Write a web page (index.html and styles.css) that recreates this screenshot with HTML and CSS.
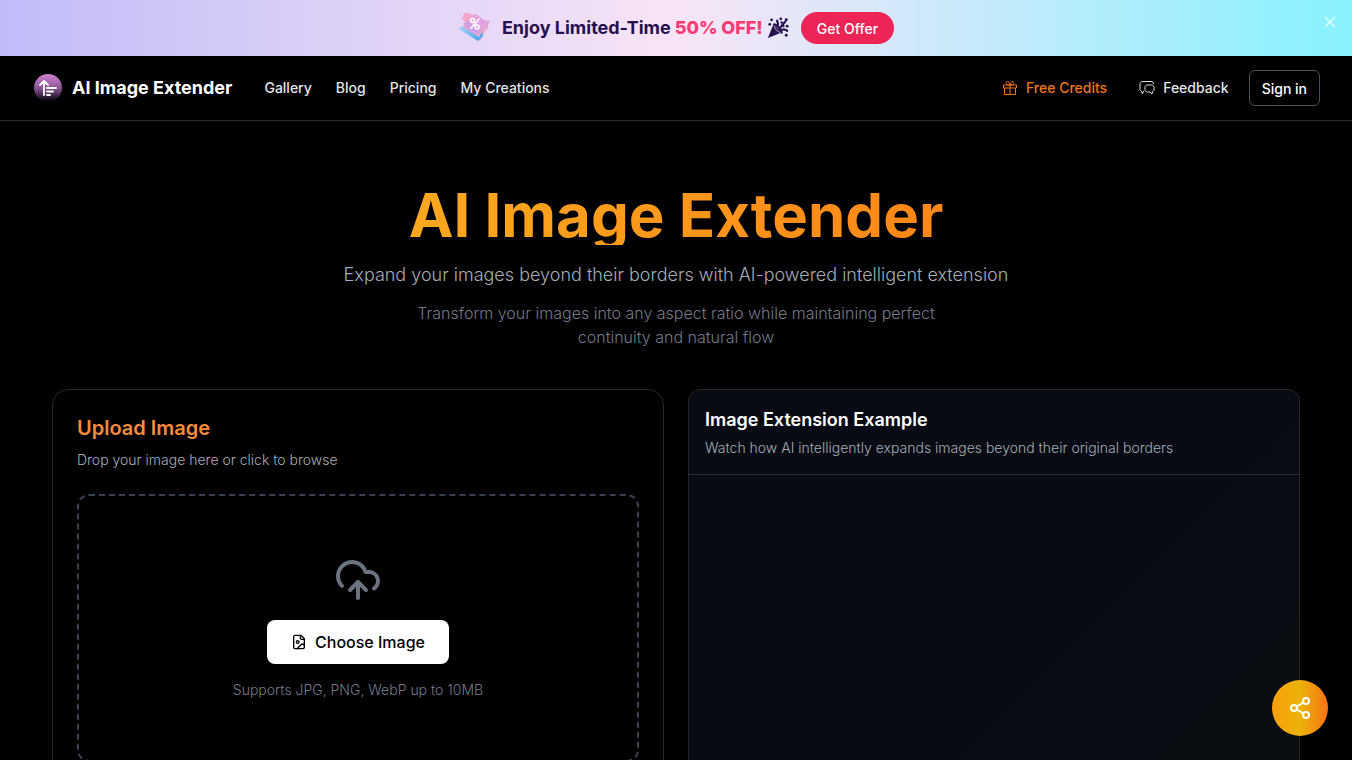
FILE: index.html
```html
<!DOCTYPE html>
<html lang="en">
<head>
    <meta charset="UTF-8">
    <meta name="viewport" content="width=device-width, initial-scale=1.0">
    <title>AI Image Extender</title>
    <link rel="stylesheet" href="styles.css">
</head>
<body>
    <div class="promo">
        <svg class="promo-art" viewBox="0 0 32 32" aria-hidden="true">
            <defs>
                <linearGradient id="ticket" x1="0" y1="0" x2="1" y2="1">
                    <stop offset="0" stop-color="#ffa9bf"/>
                    <stop offset="0.5" stop-color="#dca0e4"/>
                    <stop offset="1" stop-color="#ffb3b9"/>
                </linearGradient>
                <linearGradient id="stub" x1="0" y1="0" x2="1" y2="1">
                    <stop offset="0" stop-color="#a5dcf8"/>
                    <stop offset="1" stop-color="#3e9eea"/>
                </linearGradient>
            </defs>
            <path d="M6 1l5 0 3 2 4-1 4 3 4 3 6 1-2 4 0 3-3 3-4 9-19-11 3-7-3-3z" fill="url(#ticket)"/>
            <path d="M3 14l18 11 3-5 1 4-5 5L1 17z" fill="url(#stub)"/>
            <path d="M5 12l16 10 2-3-14-10z" fill="#bd9cef" opacity="0.6"/>
            <g fill="none" stroke="#fff" stroke-width="1.6" stroke-linecap="round">
                <path d="M21 7l-8 9"/>
                <circle cx="14.500" cy="8.500" r="2"/>
                <circle cx="19" cy="15" r="2"/>
            </g>
        </svg>
        <p class="promo-text">
            Enjoy Limited-Time <strong class="promo-off">50% OFF!</strong>
            <svg class="popper" viewBox="0 0 24 24" aria-hidden="true">
                <path d="M7 8L1 23l15-6z" fill="currentColor"/>
                <path d="M8 9c0 4 3 7 7 8" fill="none" stroke="#e9e4f7" stroke-width="0.8"/>
                <g fill="none" stroke="currentColor" stroke-width="2.4" stroke-linecap="round">
                    <path d="M8 8c3 1 7 5 8 9M11 10c2-2 1-4 0-6M14 12l6-7M15 15c2-2 4-2 7 0"/>
                </g>
                <g fill="currentColor">
                    <circle cx="5" cy="3" r="1.5"/>
                    <circle cx="3" cy="8" r="1.5"/>
                    <circle cx="15" cy="2" r="1.5"/>
                    <circle cx="16" cy="6" r="1.3"/>
                    <circle cx="21" cy="3" r="1.6"/>
                    <circle cx="22" cy="10" r="1.5"/>
                    <circle cx="18" cy="10" r="1.2"/>
                    <circle cx="21" cy="20" r="1.6"/>
                </g>
            </svg>
        </p>
        <button class="promo-button">Get Offer</button>
        <button class="promo-close" aria-label="Close">
            <svg viewBox="0 0 16 16"><path d="M3 3l10 10M13 3L3 13"/></svg>
        </button>
    </div>

    <header class="header">
        <a class="brand" href="#">
            <svg class="logo" viewBox="0 0 28 28" aria-hidden="true">
                <defs>
                    <linearGradient id="orb" x1="0" y1="0" x2="0" y2="1">
                        <stop offset="0" stop-color="#cf83d6"/>
                        <stop offset="0.5" stop-color="#8a5596"/>
                        <stop offset="0.95" stop-color="#0c0610"/>
                    </linearGradient>
                </defs>
                <circle cx="14" cy="14" r="14" fill="url(#orb)"/>
                <path d="M10 21V7M6 11l4-4 4 4M13 14h9M13 17.500h6M13 21h3" fill="none" stroke="#fff" stroke-width="1.8" stroke-linecap="round" stroke-linejoin="round"/>
            </svg>
            AI Image Extender
        </a>
        <nav class="nav">
            <a href="#">Gallery</a>
            <a href="#">Blog</a>
            <a href="#">Pricing</a>
            <a href="#">My Creations</a>
        </nav>
        <div class="actions">
            <a class="action credits" href="#">
                <svg class="icon" viewBox="0 0 16 16" aria-hidden="true">
                    <path d="M1.500 5h13v3h-13zM2.500 8v6.500h11V8M8 5v9.500M8 5C5 5 3.500 3.500 4.500 2S7.500 2 8 5c.5-3 2.500-4.500 3.500-3S11 5 8 5z"/>
                </svg>
                Free Credits
            </a>
            <a class="action" href="#">
                <svg class="icon" viewBox="0 0 16 16" aria-hidden="true">
                    <path d="M5 11.500H4l-.5 2.500-1-2.500c-1-.5-1.500-1.500-1.500-3V5c0-2 1-3.500 3-3.500h8c1.500 0 2.500 1 2.500 2.500"/>
                    <path d="M8.500 5h4c1.500 0 2.500 1 2.500 2.500V9c0 1.500-.5 2-1.500 2.500L13 14l-2-2H8.500C7 12 6 11 6 9.500v-2C6 6 7 5 8.500 5z"/>
                </svg>
                Feedback
            </a>
            <button class="sign-in">Sign in</button>
        </div>
    </header>

    <main class="main">
        <section class="hero">
            <h1>AI Image Extender</h1>
            <p class="subtitle">Expand your images beyond their borders with AI-powered intelligent extension</p>
            <p class="description">Transform your images into any aspect ratio while maintaining perfect continuity and natural flow</p>
        </section>

        <div class="panels">
            <section class="upload">
                <h2>Upload Image</h2>
                <p>Drop your image here or click to browse</p>
                <div class="dropzone">
                    <svg class="cloud" viewBox="0 0 24 24" aria-hidden="true">
                        <path d="M12 13v8"/>
                        <path d="M4 14.899A7 7 0 1 1 15.710 8h1.790a4.500 4.500 0 0 1 2.500 8.242"/>
                        <path d="m8 17 4-4 4 4"/>
                    </svg>
                    <button class="choose">
                        <svg class="file" viewBox="0 0 24 24" aria-hidden="true">
                            <path d="M15 2H6a2 2 0 0 0-2 2v16a2 2 0 0 0 2 2h12a2 2 0 0 0 2-2V7z"/>
                            <path d="M14 2v4a2 2 0 0 0 2 2h4"/>
                            <circle cx="10" cy="12" r="2"/>
                            <path d="m20 17-1.300-1.300a2.400 2.400 0 0 0-3.400 0L9 22"/>
                        </svg>
                        Choose Image
                    </button>
                    <p>Supports JPG, PNG, WebP up to 10MB</p>
                </div>
            </section>

            <section class="example">
                <div class="example-header">
                    <h2>Image Extension Example</h2>
                    <p>Watch how AI intelligently expands images beyond their original borders</p>
                </div>
            </section>
        </div>
    </main>

    <button class="share" aria-label="Share">
        <svg viewBox="0 0 24 24">
            <circle cx="18" cy="5" r="3"/>
            <circle cx="6" cy="12" r="3"/>
            <circle cx="18" cy="19" r="3"/>
            <path d="M8.600 13.500l6.800 4M15.400 6.500l-6.800 4"/>
        </svg>
    </button>
</body>
</html>
```
FILE: styles.css
```css
* {
    box-sizing: border-box;
}
body {
    margin: 0;
    background: #000;
    color: #fff;
    font-family: Inter, "Liberation Sans", sans-serif;
    font-size: 14px;
    line-height: 20px;
}
h1, h2, p {
    margin: 0;
}
a {
    color: inherit;
    text-decoration: none;
}
button {
    font-family: inherit;
    cursor: pointer;
}
.promo {
    position: relative;
    display: flex;
    justify-content: center;
    align-items: center;
    gap: 12px;
    padding: 12px 16px;
    background: linear-gradient(90deg, #c0bcf8, #f8e4f6 50%, #87f1ff);
}
.promo-art {
    width: 32px;
    height: 32px;
}
.promo-text {
    display: flex;
    align-items: center;
    gap: 4px;
    color: #26114f;
    font-size: 18px;
    font-weight: 700;
    line-height: 28px;
}
.promo-off {
    color: #fb3a72;
    font-weight: 800;
}
.popper {
    width: 22px;
    height: 22px;
}
.promo-button {
    height: 32px;
    padding: 0 16px;
    border: none;
    border-radius: 16px;
    background: #ed2456;
    color: #fff;
    font-size: 14px;
    font-weight: 500;
}
.promo-close {
    position: absolute;
    top: 14px;
    right: 14px;
    width: 16px;
    height: 16px;
    padding: 0;
    border: none;
    background: none;
}
.promo-close svg {
    display: block;
    fill: none;
    stroke: #e4fcff;
    stroke-width: 1.5;
}
.header {
    display: flex;
    align-items: center;
    padding: 14px 32px;
    border-bottom: 1px solid #27272a;
}
.brand {
    display: flex;
    align-items: center;
    gap: 10px;
    padding-left: 2px;
    font-size: 18px;
    font-weight: 700;
}
.logo {
    width: 28px;
    height: 28px;
}
.nav {
    display: flex;
    gap: 24px;
    margin-left: 32px;
    color: #e2e4e8;
    font-weight: 500;
}
.actions {
    display: flex;
    align-items: center;
    gap: 20px;
    margin-left: auto;
}
.action {
    display: flex;
    align-items: center;
    gap: 8px;
    color: #e2e4e8;
    font-weight: 500;
}
.credits {
    margin-right: 12px;
    color: #f0761d;
}
.icon {
    width: 16px;
    height: 16px;
    fill: none;
    stroke: currentColor;
    stroke-linejoin: round;
}
.sign-in {
    height: 36px;
    padding: 0 12px;
    border: 1px solid #4b5060;
    border-radius: 6px;
    background: #000;
    color: #fff;
    font-size: 14px;
    font-weight: 500;
}
.main {
    max-width: 1280px;
    margin: 0 auto;
    padding: 64px 16px;
    font-weight: 300;
}
.hero {
    margin-bottom: 40px;
    text-align: center;
}
.hero h1 {
    margin-bottom: 16px;
    background: linear-gradient(90deg, #fbbf24, #fd6f12);
    background-clip: text;
    -webkit-background-clip: text;
    color: transparent;
    font-size: 60px;
    font-weight: 700;
    line-height: 60px;
}
.subtitle {
    margin-bottom: 12px;
    color: #a6adb8;
    font-size: 18px;
    line-height: 28px;
}
.description {
    max-width: 576px;
    margin: 0 auto;
    color: #737a88;
    font-size: 16px;
    line-height: 24px;
}
.panels {
    display: grid;
    grid-template-columns: 1fr 1fr;
    gap: 24px;
}
.upload {
    padding: 24px;
    border: 1px solid #25272e;
    border-radius: 16px;
    color: #a6adb8;
}
.upload h2 {
    margin-bottom: 8px;
    color: #f88b3c;
    font-size: 20px;
    font-weight: 600;
    line-height: 28px;
}
.dropzone {
    display: flex;
    flex-direction: column;
    align-items: center;
    gap: 16px;
    margin-top: 24px;
    padding: 60px 24px;
    border: 2px dashed #374151;
    border-radius: 12px;
    color: #737a88;
}
.cloud {
    width: 48px;
    height: 48px;
    fill: none;
    stroke: #6b7280;
    stroke-width: 2;
    stroke-linecap: round;
    stroke-linejoin: round;
}
.choose {
    display: flex;
    align-items: center;
    gap: 8px;
    height: 44px;
    padding: 0 24px;
    border: none;
    border-radius: 8px;
    background: #fff;
    color: #000;
    font-size: 16px;
    font-weight: 500;
}
.file {
    width: 16px;
    height: 16px;
    fill: none;
    stroke: currentColor;
    stroke-width: 2;
    stroke-linecap: round;
    stroke-linejoin: round;
}
.example {
    border: 1px solid #27251f;
    border-radius: 12px;
    background: linear-gradient(135deg, #080b14 60%, #0a0d10);
}
.example-header {
    padding: 16px;
    border-bottom: 1px solid #272b33;
    color: #a6adb8;
}
.example h2 {
    margin-bottom: 4px;
    color: #fff;
    font-size: 18px;
    font-weight: 600;
    line-height: 28px;
}
.share {
    position: fixed;
    right: 24px;
    bottom: 24px;
    display: flex;
    justify-content: center;
    align-items: center;
    width: 56px;
    height: 56px;
    padding: 0;
    border: none;
    border-radius: 50%;
    background: linear-gradient(90deg, #f99f0b, #eab308 50%, #f97316);
}
.share svg {
    width: 24px;
    height: 24px;
    fill: none;
    stroke: #fff;
    stroke-width: 2;
}
```
